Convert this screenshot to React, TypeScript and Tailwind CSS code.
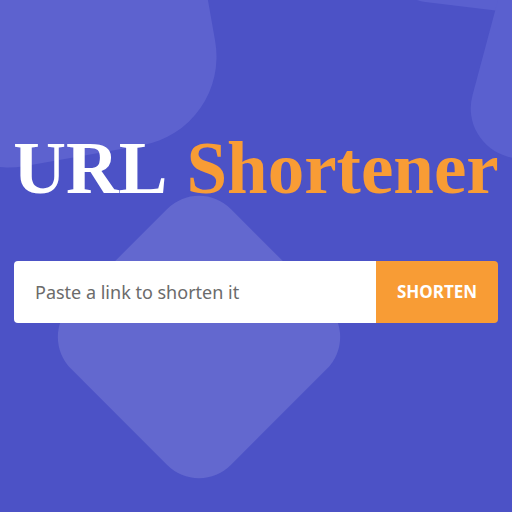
import React from "react";

const App: React.FC = () => {
    return (
        <div className="relative w-full min-h-screen overflow-hidden bg-[#4c52c6]">
            {/* soft background shapes */}
            <div className="absolute left-[-93px] top-[-142px] w-[300px] h-[300px] rounded-[90px] bg-[#5d62cf] rotate-[-10deg]" />
            <div className="absolute left-[397px] top-[-190px] w-[200px] h-[200px] rounded-[40px] bg-[#5a60cf] rotate-[7deg]" />
            <div className="absolute left-[482px] top-[-27px] w-[200px] h-[200px] rounded-[50px] bg-[#5a60cf] rotate-[15deg]" />
            <div className="absolute left-[86px] top-[224px] w-[226px] h-[226px] rounded-[45px] bg-[#6368cf] rotate-45" />

            <div className="relative flex flex-col items-center pt-[132px] px-[14px]">
                <h1 className="flex gap-[19px] text-[73px] leading-none font-bold font-['Liberation_Serif',serif] whitespace-nowrap">
                    <span className="text-white">URL</span>
                    <span className="text-[#f89c35]">Shortener</span>
                </h1>

                <div className="mt-[56px] w-full flex h-[62px] rounded-[4px] overflow-hidden">
                    <input
                        type="text"
                        placeholder="Paste a link to shorten it"
                        className="flex-1 min-w-0 bg-white pl-[21px] text-[18px] text-gray-700 placeholder:text-[#6b6b6b] outline-none font-['Noto_Sans',sans-serif]"
                    />
                    <button className="w-[122px] bg-[#f89c35] text-white font-bold text-[17px] font-['Noto_Sans',sans-serif]">
                        SHORTEN
                    </button>
                </div>
            </div>
        </div>
    );
};

export default App;
